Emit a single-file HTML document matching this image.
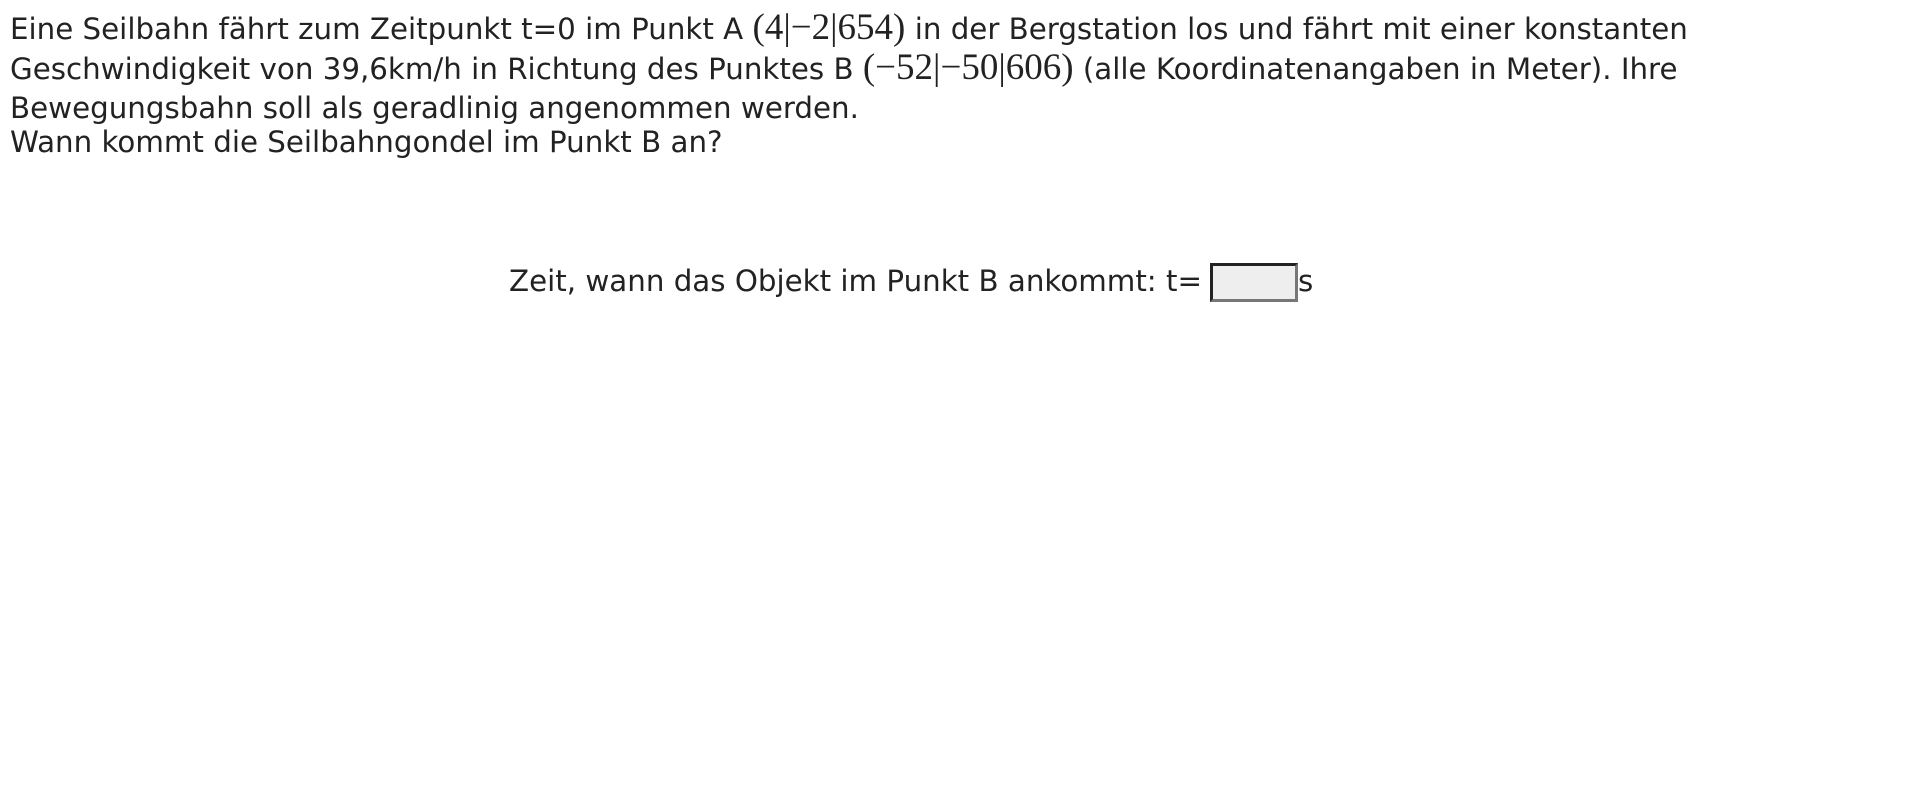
<!DOCTYPE html>
<html><head><meta charset="utf-8"><style>
body{margin:0;background:#fff;color:#222;font-family:"DejaVu Sans","Liberation Sans",sans-serif;font-size:29.3px;}
.l{position:absolute;left:10px;line-height:34px;height:34px;white-space:nowrap;}
.m{font-family:"Liberation Serif",serif;font-size:37px;line-height:30px;}
.q{position:absolute;left:509px;top:261px;line-height:40px;white-space:nowrap;}
.box{display:inline-block;width:82px;height:33px;background:#eee;border:3px solid;border-color:#222 #777 #777 #222;vertical-align:middle;margin-left:8px;}
</style></head><body>
<div class="l" style="top:12px">Eine Seilbahn fährt zum Zeitpunkt t=0 im Punkt A <span class="m">(4|−2|654)</span> in der Bergstation los und fährt mit einer konstanten</div>
<div class="l" style="top:52px">Geschwindigkeit von 39,6km/h in Richtung des Punktes B <span class="m">(−52|−50|606)</span> (alle Koordinatenangaben in Meter). Ihre</div>
<div class="l" style="top:91px">Bewegungsbahn soll als geradlinig angenommen werden.</div>
<div class="l" style="top:125px">Wann kommt die Seilbahngondel im Punkt B an?</div>
<div class="q">Zeit, wann das Objekt im Punkt B ankommt: t=<span class="box"></span>s</div>
</body></html>
